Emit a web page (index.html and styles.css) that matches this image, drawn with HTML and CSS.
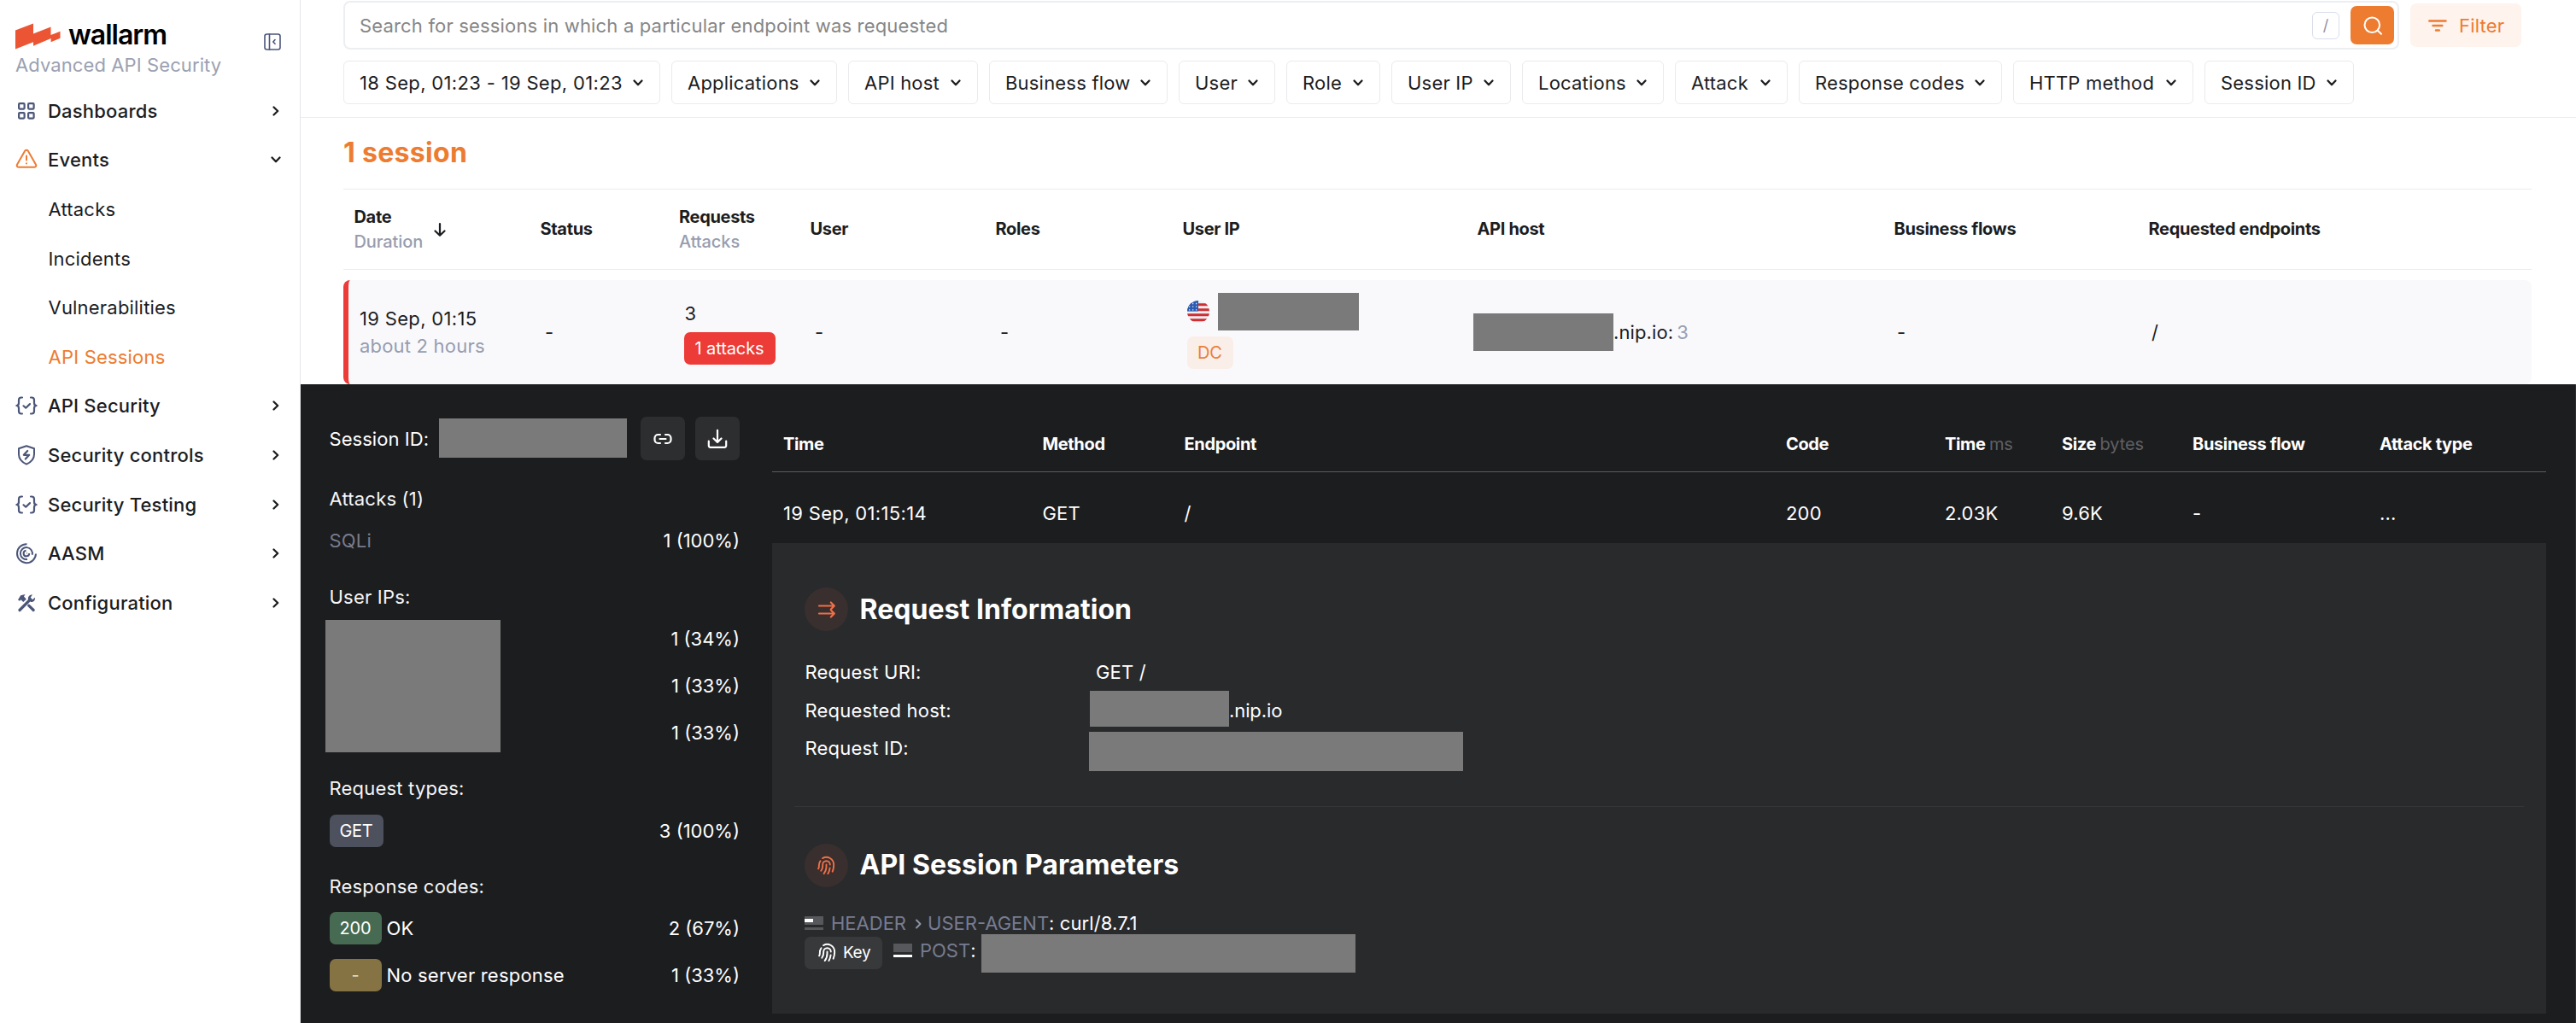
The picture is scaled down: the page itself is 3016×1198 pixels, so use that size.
FILE: index.html
```html
<!DOCTYPE html>
<html lang="en">
<head>
<meta charset="utf-8">
<title>API Sessions</title>
<link rel="stylesheet" href="styles.css">
</head>
<body>
<svg class="sprite" width="0" height="0">
  <defs>
    <symbol id="chev-right" viewBox="0 0 12 14"><path d="M3.5 2.5 8.2 7l-4.7 4.5" fill="none" stroke="currentColor" stroke-width="2.3" stroke-linecap="round" stroke-linejoin="round"/></symbol>
    <symbol id="chev-down" viewBox="0 0 14 12"><path d="M2.5 3.5 7 8.2l4.500-4.700" fill="none" stroke="currentColor" stroke-width="2.3" stroke-linecap="round" stroke-linejoin="round"/></symbol>
    <symbol id="braces" viewBox="0 0 26 22"><g fill="none" stroke="currentColor" stroke-width="2.2" stroke-linecap="round" stroke-linejoin="round"><path d="M8 1.500H7C5 1.500 4 2.600 4 4.500v3.300c0 1.800-1 3.200-2.600 3.200C3 11 4 12.400 4 14.200v3.300c0 1.900 1 3 3 3h1"/><path d="M18 1.500h1c2 0 3 1.100 3 3v3.300c0 1.800 1 3.200 2.600 3.200-1.600 0-2.600 1.400-2.600 3.200v3.300c0 1.900-1 3-3 3h-1"/><path d="m9.500 11.300 2.700 2.400 4.800-4.600"/></g></symbol>
    <symbol id="finger" viewBox="0 0 24 24"><g transform="matrix(-1 0 0 1 24 0)" fill="none" stroke="currentColor" stroke-width="2" stroke-linecap="round" stroke-linejoin="round"><path d="M19.300 6.500a9 9 0 0 1 1.700 5.500v1a6 6 0 0 0 .8 3"/><path d="M7.500 11a4.500 4.500 0 0 1 9 0v1a10 10 0 0 0 2 6.500"/><path d="M12 11v2a14 14 0 0 0 3 9"/><path d="M7.700 15a18 18 0 0 0 2.300 7"/><path d="M4.500 19.500a22 22 0 0 1-1.500-7.500v-1a9 9 0 0 1 13.600-7.800"/></g></symbol>
  </defs>
</svg>
<div class="app">
  <aside class="sidebar">
    <div class="brand">
      <div class="brand-main">
        <div class="logo">
          <svg class="logo-mark" viewBox="0 0 54 31"><path d="M0 8.500 21 .5v12L41.500 4.500v9.500l11-4.200v8l-10.900 4.400v-4.200L21 26.800v-4.500L0 30.500z" fill="#eb5533"/></svg>
          <span class="logo-text">wallarm</span>
        </div>
        <div class="brand-sub">Advanced API Security</div>
      </div>
      <svg class="collapse" viewBox="0 0 20 20" fill="none" stroke="currentColor" stroke-width="1.600" stroke-linejoin="round" stroke-linecap="round"><rect x="1" y="1" width="18" height="18" rx="2.500"/><path d="M6.500 1v18M13 7.500 10.800 10l2.200 2.300"/></svg>
    </div>
    <nav class="nav">
      <a class="nav-item"><svg class="ico" viewBox="0 0 26 26" fill="none" stroke="currentColor" stroke-width="2.200"><rect x="4.100" y="4.100" width="6.500" height="6.500" rx="1"/><rect x="15.100" y="4.100" width="6.500" height="6.500" rx="1"/><rect x="4.100" y="15.100" width="6.500" height="6.500" rx="1"/><rect x="15.100" y="15.100" width="6.500" height="6.500" rx="1"/></svg><span>Dashboards</span><svg class="chev-r"><use href="#chev-right"/></svg></a>
      <a class="nav-item"><svg class="ico ico-hot" viewBox="0 0 26 26" fill="none" stroke="currentColor" stroke-width="2" stroke-linejoin="round" stroke-linecap="round"><path d="M11.300 2.600 2 18.800c-.8 1.400 0 2.900 1.600 2.900h18.800c1.600 0 2.400-1.500 1.600-2.900L14.700 2.600c-.8-1.300-2.600-1.300-3.400 0zM13 8.500v5M13 17.200v.3"/></svg><span>Events</span><svg class="chev-d"><use href="#chev-down"/></svg></a>
      <a class="nav-item sub"><span>Attacks</span></a>
      <a class="nav-item sub"><span>Incidents</span></a>
      <a class="nav-item sub"><span>Vulnerabilities</span></a>
      <a class="nav-item sub active"><span>API Sessions</span></a>
      <a class="nav-item"><svg class="ico"><use href="#braces"/></svg><span>API Security</span><svg class="chev-r"><use href="#chev-right"/></svg></a>
      <a class="nav-item"><svg class="ico" viewBox="0 0 26 26" fill="none" stroke="currentColor" stroke-width="2" stroke-linejoin="round"><path d="m13 2.200 9 3v6.800c0 5.800-4 9.400-9 11.600C8 21.400 4 17.800 4 12V5.200z"/><path d="m14.200 8-4.400 4.800h6.400L11.800 17.500" stroke-width="2.200" stroke-linecap="round"/></svg><span>Security controls</span><svg class="chev-r"><use href="#chev-right"/></svg></a>
      <a class="nav-item"><svg class="ico"><use href="#braces"/></svg><span>Security Testing</span><svg class="chev-r"><use href="#chev-right"/></svg></a>
      <a class="nav-item"><svg class="ico" viewBox="0 0 26 26" fill="none" stroke="currentColor" stroke-width="2"><path d="M13.500 2.200A11 11 0 1 0 24 13.500"/><path d="M14 20a7 7 0 1 1 5.700-5.300M20 12v1"/><path d="M12.500 9.800a3.300 3.300 0 1 0 3.700 3.200M13 12.800h.6" /></svg><span>AASM</span><svg class="chev-r"><use href="#chev-right"/></svg></a>
      <a class="nav-item"><svg class="ico" viewBox="0 0 26 26" fill="none" stroke="currentColor"><path d="M5 21.500 17.500 9" stroke-width="3.200" stroke-linecap="round"/><path d="m15.700 16.200 5.500 5.300" stroke-width="3.200" stroke-linecap="round"/><path d="M3 9.500 6.200 4.200 11.500 3 10 5.500l2.800 3.200-3.600 3.300-2.700-2.700L5 10.800z" fill="currentColor" stroke="none"/><path d="M20 3.200a5 5 0 0 0-5.200 5.500l3.300 3.200c3.200.6 5.600-2.200 4.700-5.200L20 9.200l-2.200-2.500z" fill="currentColor" stroke="none"/></svg><span>Configuration</span><svg class="chev-r"><use href="#chev-right"/></svg></a>
    </nav>
  </aside>

  <main class="main">
    <header class="toolbar">
      <div class="search-row">
        <div class="search">
          <span class="placeholder">Search for sessions in which a particular endpoint was requested</span>
          <kbd class="key-hint">/</kbd>
          <button class="search-btn"><svg width="24" height="24" viewBox="0 0 24 24" fill="none" stroke="#fff" stroke-width="2" stroke-linecap="round"><circle cx="11.300" cy="11.300" r="8.800"/><path d="m17.800 17.800 4.200 4"/></svg></button>
        </div>
        <button class="filter-btn"><svg width="22" height="14" viewBox="0 0 22 14" fill="none" stroke="currentColor" stroke-width="2.500" stroke-linecap="round"><path d="M1.300 1.500h19.200M5.500 7h10.800M9 12.400h3.800"/></svg>Filter</button>
      </div>
      <div class="chips">
        <button class="chip"><span class="dates">18 Sep, 01:23 - 19 Sep, 01:23</span><svg class="chev-d"><use href="#chev-down"/></svg></button>
        <button class="chip"><span>Applications</span><svg class="chev-d"><use href="#chev-down"/></svg></button>
        <button class="chip"><span>API host</span><svg class="chev-d"><use href="#chev-down"/></svg></button>
        <button class="chip"><span>Business flow</span><svg class="chev-d"><use href="#chev-down"/></svg></button>
        <button class="chip"><span>User</span><svg class="chev-d"><use href="#chev-down"/></svg></button>
        <button class="chip"><span>Role</span><svg class="chev-d"><use href="#chev-down"/></svg></button>
        <button class="chip"><span>User IP</span><svg class="chev-d"><use href="#chev-down"/></svg></button>
        <button class="chip"><span>Locations</span><svg class="chev-d"><use href="#chev-down"/></svg></button>
        <button class="chip"><span>Attack</span><svg class="chev-d"><use href="#chev-down"/></svg></button>
        <button class="chip"><span>Response codes</span><svg class="chev-d"><use href="#chev-down"/></svg></button>
        <button class="chip"><span>HTTP method</span><svg class="chev-d"><use href="#chev-down"/></svg></button>
        <button class="chip"><span>Session ID</span><svg class="chev-d"><use href="#chev-down"/></svg></button>
      </div>
    </header>

    <section class="sessions">
      <h1 class="count">1 session</h1>
      <div class="s-grid s-head">
        <div class="date-head"><div>Date<br><span class="muted">Duration</span></div><svg width="16" height="18" viewBox="0 0 16 18" fill="none" stroke="currentColor" stroke-width="2.200" stroke-linecap="round" stroke-linejoin="round"><path d="M8 2v13.500M2.500 10.500 8 15.700l5.500-5.200"/></svg></div>
        <div>Status</div>
        <div>Requests<br><span class="muted">Attacks</span></div>
        <div>User</div>
        <div>Roles</div>
        <div>User IP</div>
        <div>API host</div>
        <div>Business flows</div>
        <div>Requested endpoints</div>
      </div>
      <div class="s-grid s-row">
        <div class="date-cell"><span class="when">19 Sep, 01:15</span><br><span class="soft">about 2 hours</span></div>
        <div>-</div>
        <div class="req"><span class="req-num">3</span><span class="badge badge-red">1 attacks</span></div>
        <div>-</div>
        <div>-</div>
        <div class="ip">
          <div class="ip-line">
            <svg class="flag" viewBox="0 0 26 26"><defs><clipPath id="round"><circle cx="13" cy="13" r="13"/></clipPath></defs><g clip-path="url(#round)"><path fill="#efeff2" d="M0 0h26v26H0z"/><path stroke="#cf2e32" stroke-width="3" d="M0 4.800h26M0 10.800h26M0 16.800h26M0 22.800h26"/><path fill="#2b5cb3" d="M0 0h13v12.500H0z"/><path stroke="#dfe6f4" stroke-width="1.300" stroke-dasharray="1.300 2.700" d="M2 3.500h11M2 7.200h11M2 10.800h11"/></g></svg>
            <span class="redact redact-ip"></span>
          </div>
          <span class="badge badge-dc">DC</span>
        </div>
        <div class="host"><span class="redact redact-host"></span><span>.nip.io:</span><span class="host-num">3</span></div>
        <div class="flows">-</div>
        <div class="flows">/</div>
      </div>
    </section>

    <section class="detail">
      <div class="summary">
        <div class="sid">
          <span class="sid-label">Session ID:</span><span class="redact redact-sid"></span>
          <button class="sq-btn"><svg width="24" height="24" viewBox="0 0 24 24" fill="none" stroke="#fff" stroke-width="2.200" stroke-linecap="round" stroke-linejoin="round"><path d="M9 7H6.500a4 4 0 0 0-4 4v2a4 4 0 0 0 4 4H9M15 7h2.500a4 4 0 0 1 4 4v2a4 4 0 0 1-4 4H15M8.500 12h7"/></svg></button>
          <button class="sq-btn"><svg width="24" height="24" viewBox="0 0 24 24" fill="none" stroke="#fff" stroke-width="2.200" stroke-linecap="round" stroke-linejoin="round"><path d="M12 1.800v14M7.500 11.500l4.500 4.400 4.500-4.400M1.800 14.500v5.300a2 2 0 0 0 2 2h16.400a2 2 0 0 0 2-2v-5.300"/></svg></button>
        </div>
        <div class="group">
          <h2>Attacks (1)</h2>
          <div class="line"><span class="dim">SQLi</span><b>1 (100%)</b></div>
        </div>
        <div class="group">
          <h2>User IPs:</h2>
          <div class="ips">
            <span class="redact redact-ips"></span>
            <div><div class="line"><b>1 (34%)</b></div><div class="line"><b>1 (33%)</b></div><div class="line"><b>1 (33%)</b></div></div>
          </div>
        </div>
        <div class="group">
          <h2>Request types:</h2>
          <div class="line"><span class="badge badge-get">GET</span><b>3 (100%)</b></div>
        </div>
        <div class="group">
          <h2>Response codes:</h2>
          <div class="line"><span class="badge badge-ok">200</span><span>OK</span><b>2 (67%)</b></div>
          <div class="line"><span class="badge badge-none">-</span><span>No server response</span><b>1 (33%)</b></div>
        </div>
      </div>

      <div class="requests">
        <div class="r-grid r-head">
          <div>Time</div><div>Method</div><div>Endpoint</div><div>Code</div>
          <div>Time <span class="unit">ms</span></div><div>Size <span class="unit">bytes</span></div>
          <div>Business flow</div><div>Attack type</div>
        </div>
        <div class="r-grid r-row">
          <div class="when">19 Sep, 01:15:14</div><div>GET</div><div>/</div><div>200</div><div>2.03K</div><div>9.6K</div><div>-</div><div>...</div>
        </div>
        <div class="panel">
          <div class="block">
            <h3><span class="round"><svg width="22" height="22" viewBox="0 0 22 22" fill="none" stroke="currentColor" stroke-width="2.200" stroke-linecap="round" stroke-linejoin="round"><path d="M2 6.500h17M15.800 2.500l4 4-4 4M2 15.500h17M15.800 11.500l4 4-4 4"/></svg></span>Request Information</h3>
            <dl class="facts">
              <dt>Request URI:</dt><dd class="uri">GET /</dd>
              <dt>Requested host:</dt><dd><span class="redact redact-rhost"></span>.nip.io</dd>
              <dt>Request ID:</dt><dd><span class="redact redact-rid"></span></dd>
            </dl>
          </div>
          <hr>
          <div class="block">
            <h3><span class="round"><svg width="23" height="23"><use href="#finger"/></svg></span>API Session Parameters</h3>
            <div class="params">
              <div class="param"><svg class="part" viewBox="0 0 22 16"><path fill="#57585b" d="M0 0h22v10H0zM0 13h22v3H0z"/><path fill="#fff" d="M0 3h10v4H0z"/></svg><span class="name">HEADER</span><svg class="crumb" viewBox="0 0 8 12" fill="none" stroke="currentColor" stroke-width="2" stroke-linecap="round" stroke-linejoin="round"><path d="m2 1.500 4.500 4.500L2 10.500"/></svg><span class="name">USER-AGENT</span><span class="value">: curl/8.7.1</span></div>
              <div class="param"><span class="badge badge-key"><svg width="23" height="23"><use href="#finger"/></svg>Key</span><svg class="part" viewBox="0 0 22 16"><path fill="#57585b" d="M0 0h22v10H0z"/><path fill="#fff" d="M0 13h22v3H0z"/></svg><span class="name">POST</span><span class="value">:</span><span class="redact redact-post"></span></div>
            </div>
          </div>
        </div>
      </div>
    </section>
  </main>
</div>
</body>
</html>
```
FILE: styles.css
```css
* { box-sizing: border-box; }
body { margin: 0; background: #fff; color: #1c1d1f; font: 400 22px/32px Inter, sans-serif; letter-spacing: 0.2px; }
button { font: inherit; letter-spacing: inherit; color: inherit; border: 0; padding: 0; background: none; }
h1, h2, h3, dl, dd { margin: 0; }
svg { flex: none; display: block; }
.sprite { position: absolute; }
.app { display: flex; width: 3016px; height: 1198px; overflow: hidden; }
.chev-r { width: 12px; height: 14px; }
.chev-d { width: 14px; height: 12px; }
.redact { display: block; flex: none; background: #7a7a7a; }

.sidebar { width: 352px; flex: none; border-right: 1px solid #e6e6e8; }
.brand { display: flex; height: 101px; padding: 26px 22px 0 18px; justify-content: space-between; }
.logo { display: flex; height: 34px; }
.logo-mark { width: 54px; height: 31px; margin-top: .5px; }
.logo-text { margin-left: 8px; font-size: 32px; font-weight: 600; line-height: 30px; letter-spacing: -1px; color: #000; }
.brand-sub { color: #9ba1b2; letter-spacing: .1px; }
.collapse { width: 20px; height: 20px; margin-top: 13px; color: #4a567c; }
.nav-item { display: flex; align-items: center; height: 57.6px; padding: 0 22px 0 18px; font-weight: 500; }
.nav-item span { flex: 1; margin-left: 12px; }
.nav-item.sub { padding-left: 44.5px; font-weight: 400; }
.nav-item.active { color: #ed7c31; }
.nav-item .ico { width: 26px; height: 26px; color: #4b5679; }
.nav-item .ico-hot { color: #ed7c31; }
.nav-item .chev-d { margin-right: -1px; }

.main { width: 2664px; }
.toolbar { height: 138px; padding: 1px 0 0 50px; border-bottom: 1px solid #ececee; }
.search-row { display: flex; gap: 13px; align-items: flex-start; }
.search { display: flex; align-items: center; width: 2407px; height: 57px; border: 2px solid #eceef2; border-radius: 8px; padding: 0 4px 0 17px; }
.placeholder { flex: 1; color: #868686; letter-spacing: .17px; }
.key-hint { width: 32px; height: 32px; border: 1.5px solid #d9deea; border-radius: 6px; font: 400 18px/29px Inter, sans-serif; text-align: center; color: #8d93a5; }
.search-btn { display: flex; align-items: center; justify-content: center; width: 51px; height: 45px; margin: 0 0 0 13px; background: #ed7c31; border-radius: 7px; }
.filter-btn { display: flex; align-items: center; width: 130px; height: 51px; margin-top: 3px; padding-left: 21px; gap: 14px; background: #fef3ed; border-radius: 7px; color: #ed7c31; }
.chips { display: grid; grid-template-columns: 371px 194px 152px 209px 113px 110px 140px 166px 132px 238px 211px 175px; gap: 13px; margin-top: 13px; }
.chip { display: flex; align-items: center; justify-content: space-between; height: 51px; padding: 0 18px; border: 1px solid #ebebed; border-radius: 6px; }
.dates { letter-spacing: .33px; }

.sessions { padding: 0 52px 0 50px; height: 312px; }
.count { height: 83px; padding-top: 25px; font-size: 32px; font-weight: 700; letter-spacing: .3px; color: #ed7c31; }
.s-grid { display: grid; grid-template-columns: 218px 162.5px 153.5px 217px 219px 345px 488px 298px 1fr; align-items: center; }
.s-head { height: 95px; padding-left: 12.5px; border: solid #ececee; border-width: 1.5px 0; font-size: 20px; font-weight: 700; line-height: 29px; letter-spacing: -.33px; }
.date-head { display: flex; align-items: center; gap: 12px; }
.muted { color: #979daf; font-weight: 500; letter-spacing: -.1px; }
.s-row { height: 122px; margin-top: 12px; padding-left: 12px; border-left: 6px solid #ed3b37; border-radius: 8px; background: #f9f9fc; }
.date-cell { padding-left: 1px; }
.when { letter-spacing: .33px; }
.soft { color: #979daf; }
.badge { display: flex; align-items: center; height: 38px; padding: 0 13px; border-radius: 7px; font-size: 20px; letter-spacing: -.1px; }
.req { display: flex; flex-direction: column; align-items: flex-start; gap: 6px; }
.req-num { margin-left: 1px; }
.badge-red { width: 107px; background: #ed3b37; color: #fff; }
.ip { margin-bottom: 3px; }
.ip-line { display: flex; align-items: center; gap: 10px; margin-bottom: 7px; }
.flag { width: 26px; height: 26px; }
.redact-ip { width: 165px; height: 44px; }
.badge-dc { width: 54px; padding-left: 12px; background: #faeee8; color: #ea7e38; }
.host { display: flex; align-items: center; margin-left: -10px; letter-spacing: .1px; }
.redact-host { width: 164px; height: 44px; }
.host-num { margin-left: 4px; color: #9a9fb3; }
.flows { margin-left: -2px; }

.detail { display: flex; height: 748px; background: #1c1d1f; color: #fff; border-right: 1px solid #2e2f31; }
.summary { width: 552px; padding: 38px 38px 0 33.5px; }
.sid { display: flex; align-items: center; width: 480.5px; height: 51px; margin-bottom: 23px; }
.sid-label { letter-spacing: .05px; }
.redact-sid { width: 220px; height: 46px; margin: -2px 16px 0 auto; }
.sq-btn { display: flex; align-items: center; justify-content: center; width: 52px; height: 51px; border-radius: 7px; background: #2d2e30; }
.sq-btn + .sq-btn { margin-left: 12px; }
.group { margin-bottom: 16px; }
.group h2 { font-size: 22px; font-weight: 400; line-height: 44px; color: #f6f6f7; }
.line { display: flex; align-items: center; height: 54.8px; }
.line b { margin-left: auto; font-weight: 400; letter-spacing: 0; }
.dim { color: #777b8e; }
.ips { display: flex; justify-content: space-between; }
.redact-ips { width: 205px; height: 155px; margin: 5px 0 0 -5px; }
.badge-get { width: 63px; padding: 0 0 0 12px; letter-spacing: -.4px; background: #4d505d; }
.badge-ok, .badge-none { width: 61px; margin-right: 6px; justify-content: center; padding: 0; background: #476b52; }
.badge-none { background: #857343; color: #e4dcc4; }

.requests { width: 2077px; }
.r-grid { display: grid; grid-template-columns: 303.5px 166px 704.5px 186px 137px 153px 219px 1fr; align-items: center; padding-left: 13px; }
.r-head { height: 103px; padding-top: 38px; border-bottom: 1.500px solid #5b5c5f; font-size: 20px; font-weight: 700; letter-spacing: -.35px; }
.unit { font-weight: 400; letter-spacing: -.1px; color: #5f6064; }
.r-row { height: 83px; padding-top: 13px; }
.panel { height: 551px; padding: 52px 26px 0; background: #292a2c; }
.block { padding-left: 12px; }
.block h3 { display: flex; align-items: center; height: 51px; font-size: 32px; font-weight: 700; letter-spacing: .05px; }
.round { display: flex; align-items: center; justify-content: center; width: 51px; height: 51px; margin-right: 13.5px; border-radius: 50%; background: #392f2e; color: #ee7048; }
.facts { display: grid; grid-template-columns: 333px 1fr; grid-auto-rows: 44.5px; align-items: center; margin-top: 26px; }
.facts dt { padding-left: .5px; }
.facts dd { display: flex; align-items: center; letter-spacing: -.1px; }
.facts .uri { padding-left: 8px; letter-spacing: .2px; }
.redact-rhost { width: 163px; height: 42px; margin: -3px 0 0 1px; }
.redact-rid { width: 438px; height: 46px; margin-top: 7px; }
.panel hr { margin: 45px 0 43px; border: 0; border-top: 1.500px solid #343537; }
.params { margin-top: 26px; }
.param { display: flex; height: 32px; }
.part { width: 22px; height: 16px; margin: 8px 9px 0 0; }
.name { color: #777c91; letter-spacing: 0; }
.value { letter-spacing: .1px; }
.crumb { width: 8px; height: 12px; margin: 11px 7px 0 10px; color: #8d92a5; }
.badge-key { flex: none; width: 91px; margin-right: 13px; padding: 0 0 0 15px; gap: 7px; font-size: 19px; letter-spacing: -.4px; background: #38393b; }
.redact-post { width: 438px; height: 45px; margin: -3px 0 0 6px; }
```
